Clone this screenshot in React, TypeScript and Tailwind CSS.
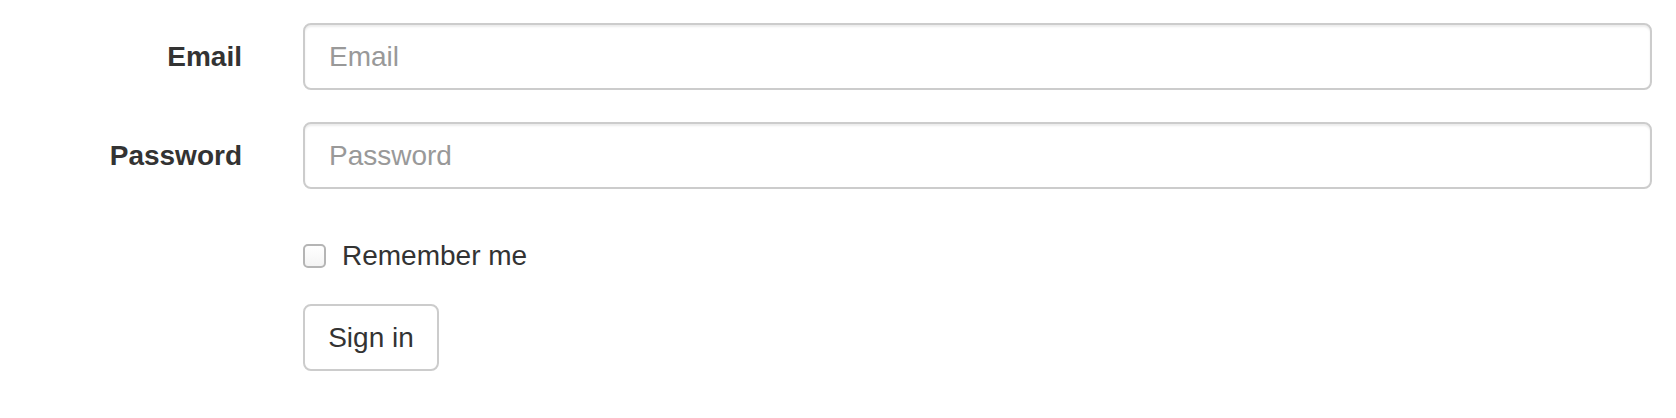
import React, { useState } from 'react';

const font = { fontFamily: '"Liberation Sans", Arial, Helvetica, sans-serif' };

const App: React.FC = () => {
  const [email, setEmail] = useState('');
  const [password, setPassword] = useState('');
  const [remember, setRemember] = useState(false);

  return (
    <div className="min-h-[418px] w-full bg-white antialiased text-[#333]" style={font}>
      <form className="pt-[23px] pr-[24px]" onSubmit={(e) => e.preventDefault()}>
        {/* Email */}
        <div className="flex items-center">
          <label htmlFor="email" className="w-[242px] shrink-0 text-right text-[28px] font-bold leading-[40px]">
            Email
          </label>
          <input
            id="email"
            type="email"
            value={email}
            onChange={(e) => setEmail(e.target.value)}
            placeholder="Email"
            className="ml-[61px] h-[67px] flex-1 rounded-[8px] border-2 border-[#ccc] bg-white px-[24px] text-[28px] text-[#555] placeholder:text-[#999] shadow-[inset_0_2px_2px_rgba(0,0,0,0.075)] outline-none"
          />
        </div>

        {/* Password */}
        <div className="mt-[32px] flex items-center">
          <label htmlFor="password" className="w-[242px] shrink-0 text-right text-[28px] font-bold leading-[40px]">
            Password
          </label>
          <input
            id="password"
            type="password"
            value={password}
            onChange={(e) => setPassword(e.target.value)}
            placeholder="Password"
            className="ml-[61px] h-[67px] flex-1 rounded-[8px] border-2 border-[#ccc] bg-white px-[24px] text-[28px] text-[#555] placeholder:text-[#999] shadow-[inset_0_2px_2px_rgba(0,0,0,0.075)] outline-none"
          />
        </div>

        {/* Remember me */}
        <div className="mt-[47px] pl-[303px]">
          <label className="flex cursor-pointer items-center gap-[16px] text-[28px] leading-[40px]">
            <input
              type="checkbox"
              checked={remember}
              onChange={(e) => setRemember(e.target.checked)}
              className="h-[24px] w-[23px] shrink-0 appearance-none rounded-[5px] border-2 border-[#b5b5b5] bg-gradient-to-b from-white to-[#f4f4f4] checked:bg-[#3b82f6]"
            />
            Remember me
          </label>
        </div>

        {/* Submit */}
        <div className="mt-[28px] pl-[303px]">
          <button
            type="submit"
            className="h-[67px] w-[136px] rounded-[8px] border-2 border-[#ccc] bg-white text-[28px] leading-[40px] text-[#333]"
          >
            Sign in
          </button>
        </div>
      </form>
    </div>
  );
};

export default App;
